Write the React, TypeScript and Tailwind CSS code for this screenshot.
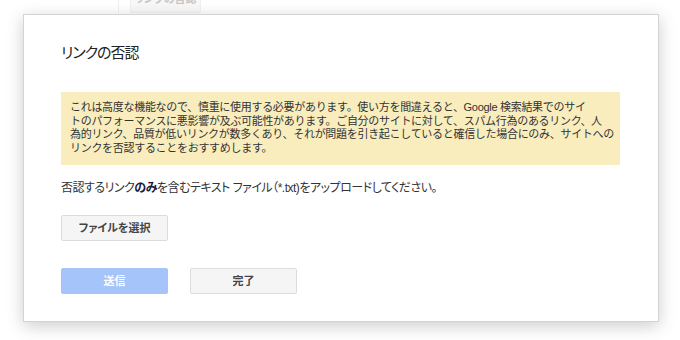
const FONT = "font-['Liberation_Sans','Noto_Sans_CJK_JP',sans-serif]";

const WARNING_LINES = [
  'これは高度な機能なので、慎重に使用する必要があります。使い方を間違えると、Google 検索結果でのサイ',
  'トのパフォーマンスに悪影響が及ぶ可能性があります。ご自分のサイトに対して、スパム行為のあるリンク、人',
  '為的リンク、品質が低いリンクが数多くあり、それが問題を引き起こしていると確信した場合にのみ、サイトへの',
  'リンクを否認することをおすすめします。',
];

export default function App() {
  return (
    <div className={`relative h-[340px] w-[680px] overflow-hidden bg-white ${FONT}`}>
      <div className="flex items-start pl-[118px]">
        <div className="h-[13px] w-px bg-[#f0f0f0]" />
        <div className="-mt-[14px] ml-[11px] flex h-[27px] w-[71px] items-center justify-center rounded-[2px] border border-[#f0f0f0] bg-[#f8f8f8] text-[11px] font-bold text-[#c8c8c8] [font-feature-settings:'palt']">
          リンクの否認
        </div>
      </div>

      {/* modal */}
      <div className="absolute left-[23px] top-[14px] w-[636px] border border-[#d4d4d4] bg-white pb-[27px] pl-[37px] pr-[38px] pt-[27px] shadow-[0_4px_16px_rgba(0,0,0,0.2)]">
        <h1 className="text-[15px] leading-[21px] tracking-[-1px] text-[#222] [font-feature-settings:'palt']">
          リンクの否認
        </h1>

        <div className="mt-[29px] bg-[#f9edbe] px-[9px] py-[9px] text-[11px] leading-[13.7px] tracking-[-0.3px] text-[#333]">
          {WARNING_LINES.map((line) => (
            <div key={line} className="whitespace-nowrap">
              {line}
            </div>
          ))}
        </div>

        <p className="mt-[15px] text-[12px] leading-[16px] tracking-[-0.5px] text-[#333] [font-feature-settings:'palt']">
          否認するリンク<b className="text-[#1a1a40]">のみ</b>を含むテキスト ファイル（*.txt)をアップロードしてください。
        </p>

        <button className="mt-[19px] flex h-[26px] w-[107px] items-center justify-center rounded-[2px] border border-[#dcdcdc] bg-[#f5f5f5] text-[11px] font-bold text-[#444] [font-feature-settings:'palt']">
          ファイルを選択
        </button>

        <div className="mt-[27px] flex gap-[22px]">
          <button className="flex h-[26px] w-[107px] items-center justify-center rounded-[2px] border border-[#a6c3f7] bg-[#a5c4f9] text-[11px] font-bold text-white">
            送信
          </button>
          <button className="flex h-[26px] w-[107px] items-center justify-center rounded-[2px] border border-[#dcdcdc] bg-[#f5f5f5] text-[11px] font-bold text-[#444]">
            完了
          </button>
        </div>
      </div>
    </div>
  );
}
